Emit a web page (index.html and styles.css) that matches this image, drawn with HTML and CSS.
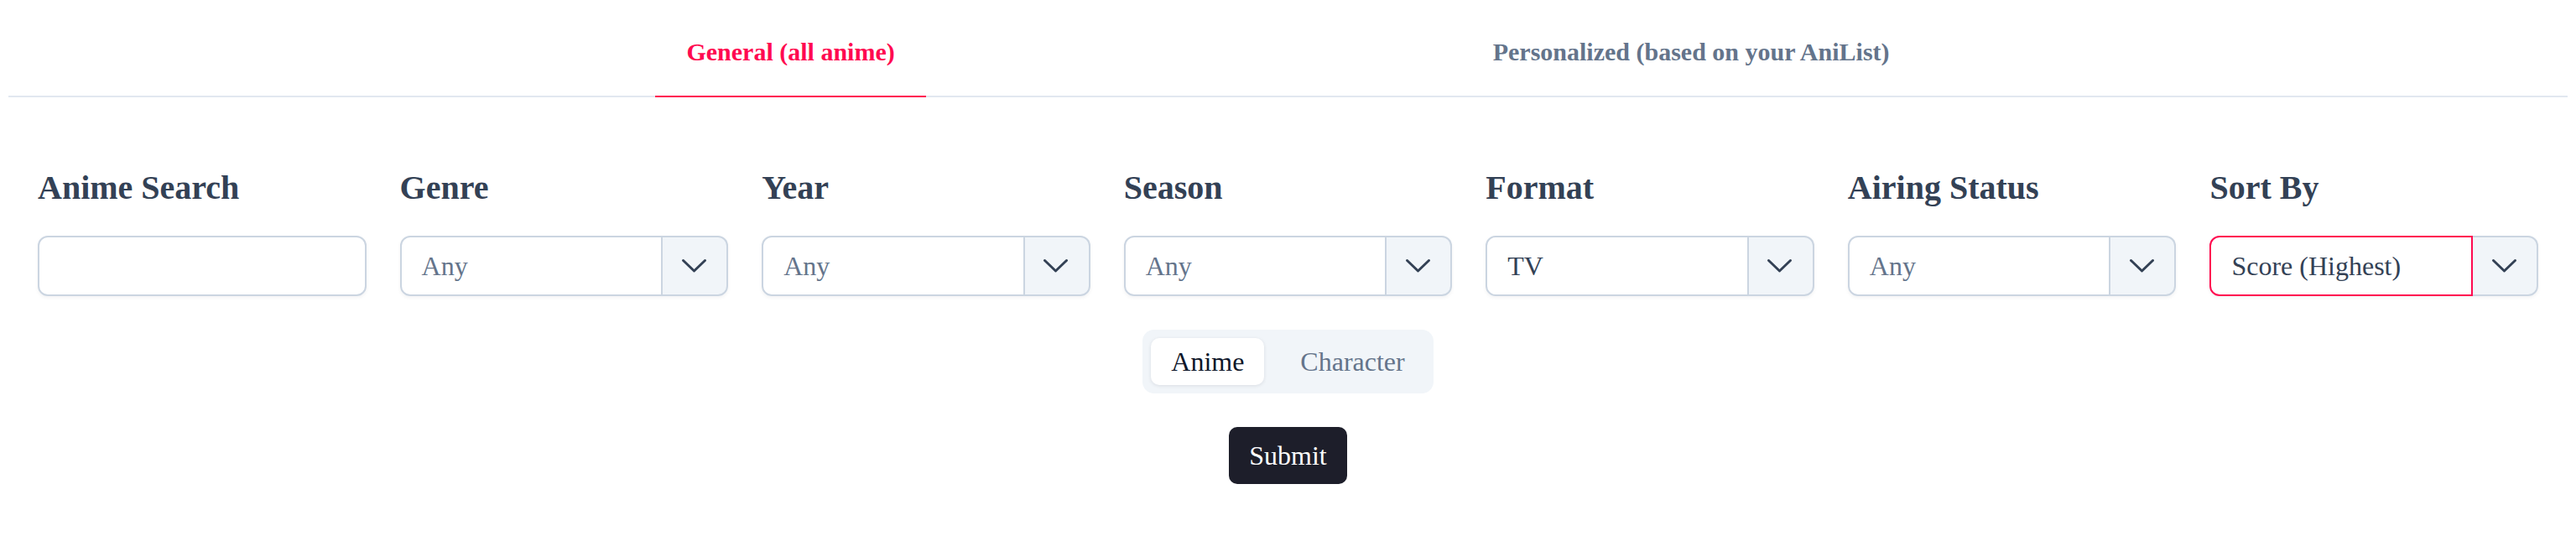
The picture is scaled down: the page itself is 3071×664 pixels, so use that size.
FILE: index.html
```html
<!DOCTYPE html>
<html lang="en">
<head>
<meta charset="utf-8">
<title>Anime Search</title>
<link rel="stylesheet" href="styles.css">
</head>
<body>
<div class="page">
  <div class="tablist">
    <button class="tab tab-active">General (all anime)</button>
    <button class="tab">Personalized (based on your AniList)</button>
  </div>

  <div class="filters">
    <div class="grid">
      <div class="field">
        <label class="label">Anime Search</label>
        <input class="input" type="text">
      </div>
      <div class="field">
        <label class="label">Genre</label>
        <div class="select">
          <div class="select-value placeholder">Any</div>
          <div class="select-btn"><svg class="chev" viewBox="0 0 31 18"><polyline points="2.5,2.5 15.5,15 28.5,2.5"/></svg></div>
        </div>
      </div>
      <div class="field">
        <label class="label">Year</label>
        <div class="select">
          <div class="select-value placeholder">Any</div>
          <div class="select-btn"><svg class="chev" viewBox="0 0 31 18"><polyline points="2.5,2.5 15.5,15 28.5,2.5"/></svg></div>
        </div>
      </div>
      <div class="field">
        <label class="label">Season</label>
        <div class="select">
          <div class="select-value placeholder">Any</div>
          <div class="select-btn"><svg class="chev" viewBox="0 0 31 18"><polyline points="2.5,2.5 15.5,15 28.5,2.5"/></svg></div>
        </div>
      </div>
      <div class="field">
        <label class="label">Format</label>
        <div class="select">
          <div class="select-value">TV</div>
          <div class="select-btn"><svg class="chev" viewBox="0 0 31 18"><polyline points="2.5,2.5 15.5,15 28.5,2.5"/></svg></div>
        </div>
      </div>
      <div class="field">
        <label class="label">Airing Status</label>
        <div class="select">
          <div class="select-value placeholder">Any</div>
          <div class="select-btn"><svg class="chev" viewBox="0 0 31 18"><polyline points="2.5,2.5 15.5,15 28.5,2.5"/></svg></div>
        </div>
      </div>
      <div class="field">
        <label class="label">Sort By</label>
        <div class="select">
          <div class="select-value focused">Score (Highest)</div>
          <div class="select-btn"><svg class="chev" viewBox="0 0 31 18"><polyline points="2.5,2.5 15.5,15 28.5,2.5"/></svg></div>
        </div>
      </div>
    </div>

    <div class="toggle-row">
      <div class="toggle">
        <div class="pill pill-active">Anime</div>
        <div class="pill">Character</div>
      </div>
    </div>

    <div class="submit-row">
      <button class="submit">Submit</button>
    </div>
  </div>
</div>
</body>
</html>
```

FILE: styles.css
```css
* {
  box-sizing: border-box;
}

html, body {
  margin: 0;
  padding: 0;
  background: #ffffff;
}

body {
  font-family: "Liberation Serif", "Times New Roman", serif;
  color: #334155;
}

.page {
  padding: 0 10px;
}

.tablist {
  display: flex;
  justify-content: center;
  gap: 639px;
  padding-top: 10px;
  border-bottom: 2px solid #e2e8f0;
}

.tab {
  font-family: inherit;
  font-size: 30px;
  font-weight: bold;
  line-height: 40px;
  color: #64748b;
  background: none;
  border: none;
  border-bottom: 2px solid transparent;
  margin: 0 0 -2px 0;
  padding: 32px 37px 32px;
  cursor: pointer;
}

.tab-active {
  color: #ff0a50;
  border-bottom-color: #ff0a50;
}

.filters {
  padding: 84px 35px 0;
}

.grid {
  display: grid;
  grid-template-columns: repeat(7, 1fr);
  column-gap: 40px;
}

.field {
  display: flex;
  flex-direction: column;
}

.label {
  display: block;
  font-size: 40px;
  font-weight: bold;
  line-height: 48px;
  color: #334155;
  margin-bottom: 33px;
}

.input {
  height: 72px;
  width: 100%;
  border: 2px solid #cbd5e1;
  border-radius: 12px;
  background: #fff;
  box-shadow: 0 2px 4px rgba(15, 23, 42, 0.05);
  font-family: inherit;
  font-size: 32px;
  padding: 0 24px;
  outline: none;
}

.select {
  display: flex;
  height: 72px;
  border-radius: 12px;
  box-shadow: 0 2px 4px rgba(15, 23, 42, 0.05);
}

.select-value {
  flex: 1;
  min-width: 0;
  display: flex;
  align-items: center;
  padding: 0 24px;
  border: 2px solid #cbd5e1;
  border-radius: 12px 0 0 12px;
  background: #fff;
  font-size: 32px;
  color: #334155;
  white-space: nowrap;
}

.select-value.placeholder {
  color: #64748b;
}

.select-value.focused {
  border-color: #ff0a50;
}

.select-btn {
  width: 78px;
  flex: none;
  display: flex;
  align-items: center;
  justify-content: center;
  background: #f1f5f9;
  border: 2px solid #cbd5e1;
  border-left: none;
  border-radius: 0 12px 12px 0;
}

.chev {
  width: 31px;
  height: 18px;
  margin-left: -2px;
}

.chev polyline {
  fill: none;
  stroke: #334155;
  stroke-width: 3;
  stroke-linecap: round;
  stroke-linejoin: round;
}

.toggle-row {
  display: flex;
  justify-content: center;
  margin-top: 40px;
}

.toggle {
  display: flex;
  gap: 19px;
  padding: 10px;
  background: #f1f5f9;
  border-radius: 14px;
}

.pill {
  height: 56px;
  padding: 0 24px;
  display: flex;
  align-items: center;
  font-size: 32px;
  color: #64748b;
  border-radius: 10px;
}

.pill-active {
  background: #ffffff;
  color: #0f172a;
  box-shadow: 0 1px 4px rgba(15, 23, 42, 0.1);
}

.submit-row {
  display: flex;
  justify-content: center;
  margin-top: 40px;
}

.submit {
  height: 68px;
  padding: 0 24px;
  font-family: inherit;
  font-size: 32px;
  color: #ffffff;
  background: #1d1e2a;
  border: none;
  border-radius: 10px;
  cursor: pointer;
}
```
